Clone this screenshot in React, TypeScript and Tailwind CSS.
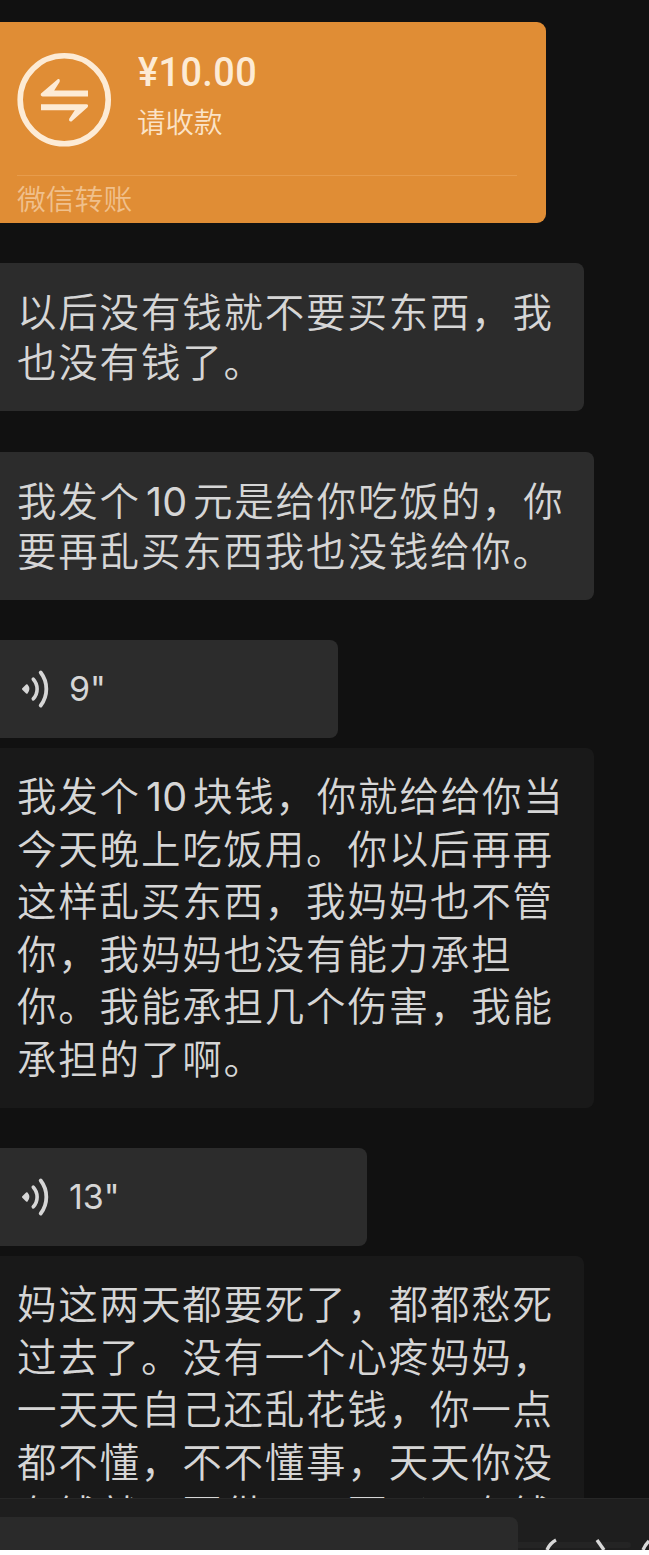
import type { ReactNode } from 'react';

const Num = ({ children }: { children: ReactNode }) => (
    <span className="inline-block w-[52px] pl-[5px] text-left font-['Inter'] text-[39.5px] font-normal tracking-[0.2px] leading-none">{children}</span>
);

const SHORT_NOTES: { width: string; lines: ReactNode[] }[] = [
    {
        width: 'w-[584px] mt-[40px] h-[148px]',
        lines: ['以后没有钱就不要买东西，我', '也没有钱了。'],
    },
    {
        width: 'w-[594px] mt-[41px] h-[148px]',
        lines: [<>我发个<Num>10</Num>元是给你吃饭的，你</>, '要再乱买东西我也没钱给你。'],
    },
];

const TRANSCRIPT_A: ReactNode[] = [
    <>我发个<Num>10</Num>块钱，你就给给你当</>,
    '今天晚上吃饭用。你以后再再',
    '这样乱买东西，我妈妈也不管',
    '你，我妈妈也没有能力承担',
    '你。我能承担几个伤害，我能',
    '承担的了啊。',
];

const TRANSCRIPT_B: ReactNode[] = [
    '妈这两天都要死了，都都愁死',
    '过去了。没有一个心疼妈妈，',
    '一天天自己还乱花钱，你一点',
    '都不懂，不不懂事，天天你没',
    '有钱就不要供，不要买，有钱',
];

function Lines({ lines, className }: { lines: ReactNode[]; className: string }) {
    return (
        <div className={`whitespace-nowrap text-[39.5px] font-[350] tracking-[1.8px] text-[#d6d6d6] ${className}`}>
            {lines.map((line, i) => (
                <p key={i}>{line}</p>
            ))}
        </div>
    );
}

function Voice({ seconds, className }: { seconds: number; className: string }) {
    return (
        <div className={`flex shrink-0 items-center rounded-r-[8px] bg-[#2c2c2c] pl-[20px] text-[#d6d6d6] ${className}`}>
            <svg width="32" height="42" viewBox="0 0 32 42" fill="none" stroke="currentColor" strokeLinecap="round">
                <path d="M3 21 L6.8 17.2 A6 6 0 0 1 6.8 24.8 Z" fill="currentColor" strokeWidth="2" strokeLinejoin="round" />
                <path d="M13.3 11.2 A14.5 14.5 0 0 1 13.3 30.8" strokeWidth="3.6" />
                <path d="M20.7 4.5 A27 27 0 0 1 20.7 37.5" strokeWidth="3.8" />
            </svg>
            <span className="ml-[17px] font-['Inter'] text-[34px] font-normal leading-none">{seconds}"</span>
        </div>
    );
}

function TransferCard() {
    return (
        <div className="mt-[22px] flex h-[201px] w-[546px] shrink-0 flex-col rounded-r-[9px] bg-[#e08d35] pl-[17px] pr-[29px]">
            <div className="flex h-[154px] border-b border-[#e79c4c]">
                <svg className="mt-[31px] shrink-0" width="94" height="94" viewBox="0 0 94 94" fill="none">
                    <circle cx="47.2" cy="46.8" r="44" stroke="#fdebd5" strokeWidth="5.6" />
                    <path d="M24 40.5 L41 26 Q43.4 25.5 42.6 29 L37.2 37.4 H71 V43.4 H25.5 Q23 43 24 40.5 Z" fill="#fdebd5" />
                    <path d="M70.6 54.2 L54.5 68.5 Q51.5 69 52.2 65.8 L57.8 57.2 H24 V51.2 H69.5 Q72 51.6 70.6 54.2 Z" fill="#fdebd5" />
                </svg>
                <div className="ml-[26px] pt-[28px]">
                    <p className="ml-px origin-left scale-x-[0.91] font-['Roboto'] text-[41.5px] font-medium leading-[44px] tracking-[0.5px] text-[#fdebd5]">¥10.00</p>
                    <p className="mt-[7px] text-[28.5px] font-[350] leading-[40px] text-[#fbe3c8]">请收款</p>
                </div>
            </div>
            <p className="mt-[1px] text-[28.8px] font-[350] leading-[42px] text-[#f0c08c]">微信转账</p>
        </div>
    );
}

export default function App() {
    return (
        <div className="flex h-[1555px] w-[649px] flex-col overflow-hidden bg-white font-['Noto_Sans_CJK_SC',sans-serif]">
            <div className="flex h-[1498px] shrink-0 flex-col overflow-hidden bg-[#111111]">
                <TransferCard />
                {SHORT_NOTES.map((note, i) => (
                    <div key={i} className={`shrink-0 rounded-r-[8px] bg-[#2c2c2c] pl-[17px] pt-[22px] ${note.width}`}>
                        <Lines lines={note.lines} className="leading-[50.4px]" />
                    </div>
                ))}
                <Voice seconds={9} className="mt-[40px] h-[98px] w-[338px]" />
                <div className="mt-[10px] h-[360px] w-[594px] shrink-0 rounded-r-[8px] bg-[#191919] pl-[17px] pt-[20px]">
                    <Lines lines={TRANSCRIPT_A} className="leading-[52.5px]" />
                </div>
                <Voice seconds={13} className="mt-[40px] h-[98px] w-[367px]" />
                <div className="mt-[10px] h-[359px] w-[584px] shrink-0 rounded-r-[8px] bg-[#191919] pl-[17px] pt-[20px]">
                    <Lines lines={TRANSCRIPT_B} className="leading-[52.5px]" />
                </div>
            </div>

            {/* Input bar, cut off by the bottom edge */}
            <div className="flex h-[52px] shrink-0 items-end overflow-hidden border-t border-[#272727] bg-[#1e1e1e]">
                <div className="h-[33px] w-[518px] rounded-tr-[8px] bg-[#2a2a2a]" />
                <svg width="131" height="14" viewBox="0 0 131 14" fill="none" stroke="#d8d8d8">
                    <path d="M0 9 H110" stroke="#242424" strokeWidth="6" strokeLinecap="round" />
                    <path d="M29 14 Q32 7 38 4" strokeWidth="3.4" />
                    <path d="M79 4 L86 14" strokeWidth="3.4" />
                    <path d="M125 14 Q127 9 131 5" strokeWidth="3.4" />
                </svg>
            </div>
        </div>
    );
}
